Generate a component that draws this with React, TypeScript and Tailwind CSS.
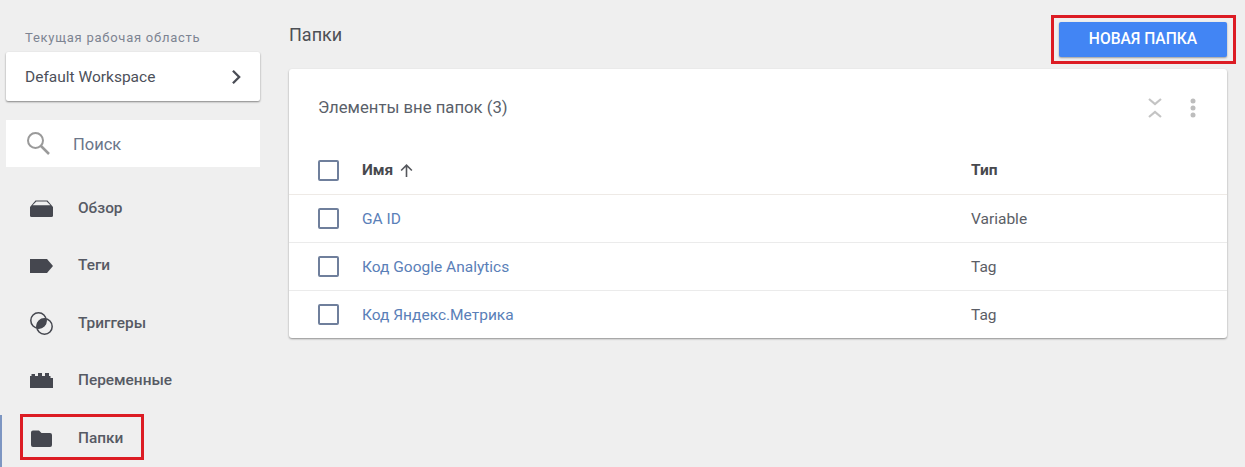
import * as React from 'react'

const NAV = [
  {
    label: 'Обзор',
    icon: (
      <svg viewBox="0 0 23 17" className="h-[17px] w-[23px]" aria-hidden="true">
        <path d="M5.500 0.500h12L23 7v8.500a1.500 1.500 0 0 1-1.500 1.500h-20A1.500 1.500 0 0 1 0 15.500V7z" fill="#45474f" />
        <path d="M2.600 5.200 6.300 1.500h10.400l3.700 3.700z" fill="#efefef" />
      </svg>
    ),
  },
  {
    label: 'Теги',
    icon: (
      <svg viewBox="0 0 23 14" className="h-[14px] w-[23px]" aria-hidden="true">
        <path d="M0 0h17l6 7-6 7H0z" fill="#45474f" />
      </svg>
    ),
  },
  {
    label: 'Триггеры',
    icon: (
      <svg viewBox="0 0 23 23" className="size-[23px]" fill="none" aria-hidden="true">
        <circle cx="8.500" cy="8.500" r="7.700" stroke="#45474f" strokeWidth="1.500" />
        <circle cx="14.500" cy="14.500" r="7.700" stroke="#45474f" strokeWidth="1.500" />
        <path d="M16.100 6.900A7.700 7.700 0 0 1 6.900 16.100 7.700 7.700 0 0 1 16.100 6.900z" fill="#45474f" />
      </svg>
    ),
  },
  {
    label: 'Переменные',
    icon: (
      <svg viewBox="0 0 23 15" className="h-[15px] w-[23px]" aria-hidden="true">
        <path d="M0 15V3h1.500V1h3.500v2h3V0h4v3h3V0h4v3h1.500v2H23v10z" fill="#45474f" />
      </svg>
    ),
  },
  {
    label: 'Папки',
    icon: (
      <svg viewBox="0 0 21 17" className="ml-[1px] h-[17px] w-[21px]" aria-hidden="true">
        <path d="M2 0.500h6l2.500 2.500H19a2 2 0 0 1 2 2v10a2 2 0 0 1-2 2H2a2 2 0 0 1-2-2V2.500a2 2 0 0 1 2-2z" fill="#45474f" />
      </svg>
    ),
  },
]

const ROWS = [
  { name: 'GA ID', type: 'Variable' },
  { name: 'Код Google Analytics', type: 'Tag' },
  { name: 'Код Яндекс.Метрика', type: 'Tag' },
]

function Checkbox() {
  return <span className="block size-[21px] shrink-0 rounded-[2px] border-2 border-[#6f7f9c] bg-white" />
}

export default function App() {
  return (
    <div className="relative flex h-[467px] w-[1245px] overflow-hidden bg-[#efefef] font-['Roboto',sans-serif] text-[#4a4d55]">
      {/* Sidebar */}
      <aside className="relative flex w-[289px] shrink-0 flex-col pl-[6px] pr-[29px] pt-[29px]">
        <span className="absolute bottom-0 left-0 h-[52px] w-[2px] bg-[#7d96c2]" />
        <p className="pl-[19px] pt-[1px] text-[13px] leading-[16px] tracking-[0.75px] text-[#7d8492]">Текущая рабочая область</p>
        <div className="mt-[6px] flex h-[50px] items-center justify-between rounded-[2px] bg-white pl-[19px] pr-[18px] shadow-[0_1px_2px_rgba(0,0,0,0.45)]">
          <span className="pt-[2px] text-[15.500px] text-[#4c505a]">Default Workspace</span>
          <svg viewBox="0 0 12 18" className="h-[16px] w-[11px]" fill="none" aria-hidden="true">
            <path d="M2 2l7 7-7 7" stroke="#4a4d55" strokeWidth="2.600" />
          </svg>
        </div>
        <div className="mt-[19px] flex h-[47px] items-center bg-white pl-[20px]">
          <svg viewBox="0 0 24 24" className="size-[24px]" fill="none" aria-hidden="true">
            <circle cx="9.500" cy="9.500" r="7.500" stroke="#9a9a9a" strokeWidth="2" />
            <path d="M15 15l8 8" stroke="#9a9a9a" strokeWidth="2.500" />
          </svg>
          <span className="ml-[23px] pt-[4px] text-[16.500px] text-[#6b7689]">Поиск</span>
        </div>
        <nav className="mt-[13px] flex flex-col">
          {NAV.map((item) => (
            <div key={item.label} className="flex h-[57.500px] items-center">
              <span className="flex w-[72px] shrink-0 justify-start pl-[24px]">{item.icon}</span>
              <span className="text-[15.400px] font-medium text-[#565a64]">{item.label}</span>
            </div>
          ))}
        </nav>
      </aside>

      {/* Main */}
      <main className="flex w-[938px] shrink-0 flex-col">
        <header className="flex h-[69px] items-start justify-between pt-[22px]">
          <h1 className="mt-[2px] text-[18px] leading-[22px] text-[#4d4f55]">Папки</h1>
          <button className="h-[35px] w-[168px] rounded-[2px] bg-[#4285f4] text-[15.600px] font-medium text-white shadow-[0_1px_2px_rgba(0,0,0,0.35)]">
            НОВАЯ ПАПКА
          </button>
        </header>
        <section className="h-[269px] rounded-[3px] bg-white shadow-[0_1px_2px_rgba(0,0,0,0.4)]">
          <div className="flex h-[78px] items-center justify-between pl-[29px] pr-[31px]">
            <h2 className="text-[16.700px] text-[#5a5f6a]">Элементы вне папок (3)</h2>
            <div className="flex items-center gap-[28px]">
              <svg viewBox="0 0 14 20" className="h-[20px] w-[14px]" fill="none" aria-hidden="true">
                <path d="M1 1l6 5 6-5M1 19l6-5 6 5" stroke="#c4c4c4" strokeWidth="2.200" />
              </svg>
              <svg viewBox="0 0 6 20" className="h-[20px] w-[6px]" aria-hidden="true">
                <circle cx="3" cy="3" r="2.500" fill="#bdbdbd" />
                <circle cx="3" cy="10" r="2.500" fill="#bdbdbd" />
                <circle cx="3" cy="17" r="2.500" fill="#bdbdbd" />
              </svg>
            </div>
          </div>
          <div className="flex h-[48px] items-center border-b border-[#eeeae6] pl-[29px]">
            <Checkbox />
            <span className="ml-[23px] flex w-[609px] items-center gap-[6px] text-[15.500px] font-bold text-[#47494e]">
              Имя
              <svg viewBox="0 0 14 14" className="size-[15px]" fill="none" aria-hidden="true">
                <path d="M7 13V2M2 7l5-5 5 5" stroke="#55575c" strokeWidth="1.500" />
              </svg>
            </span>
            <span className="text-[15.500px] font-bold text-[#47494e]">Тип</span>
          </div>
          {ROWS.map((row, i) => (
            <div
              key={row.name}
              className={i < ROWS.length - 1 ? 'flex h-[48px] items-center border-b border-[#ebebeb] pl-[29px]' : 'flex h-[47px] items-center pl-[29px]'}
            >
              <Checkbox />
              <span className="ml-[23px] w-[609px] pt-[2px] text-[15.500px] text-[#5a80b8]">{row.name}</span>
              <span className="pt-[2px] text-[15.500px] text-[#5b5e66]">{row.type}</span>
            </div>
          ))}
        </section>
      </main>

      {/* Red highlight frames */}
      <div className="absolute left-[20px] top-[414px] h-[46px] w-[124px] border-[3px] border-[#dc1c24]" />
      <div className="absolute left-[1051px] top-[15px] h-[49px] w-[185px] border-[3px] border-[#dc1c24]" />
    </div>
  )
}
